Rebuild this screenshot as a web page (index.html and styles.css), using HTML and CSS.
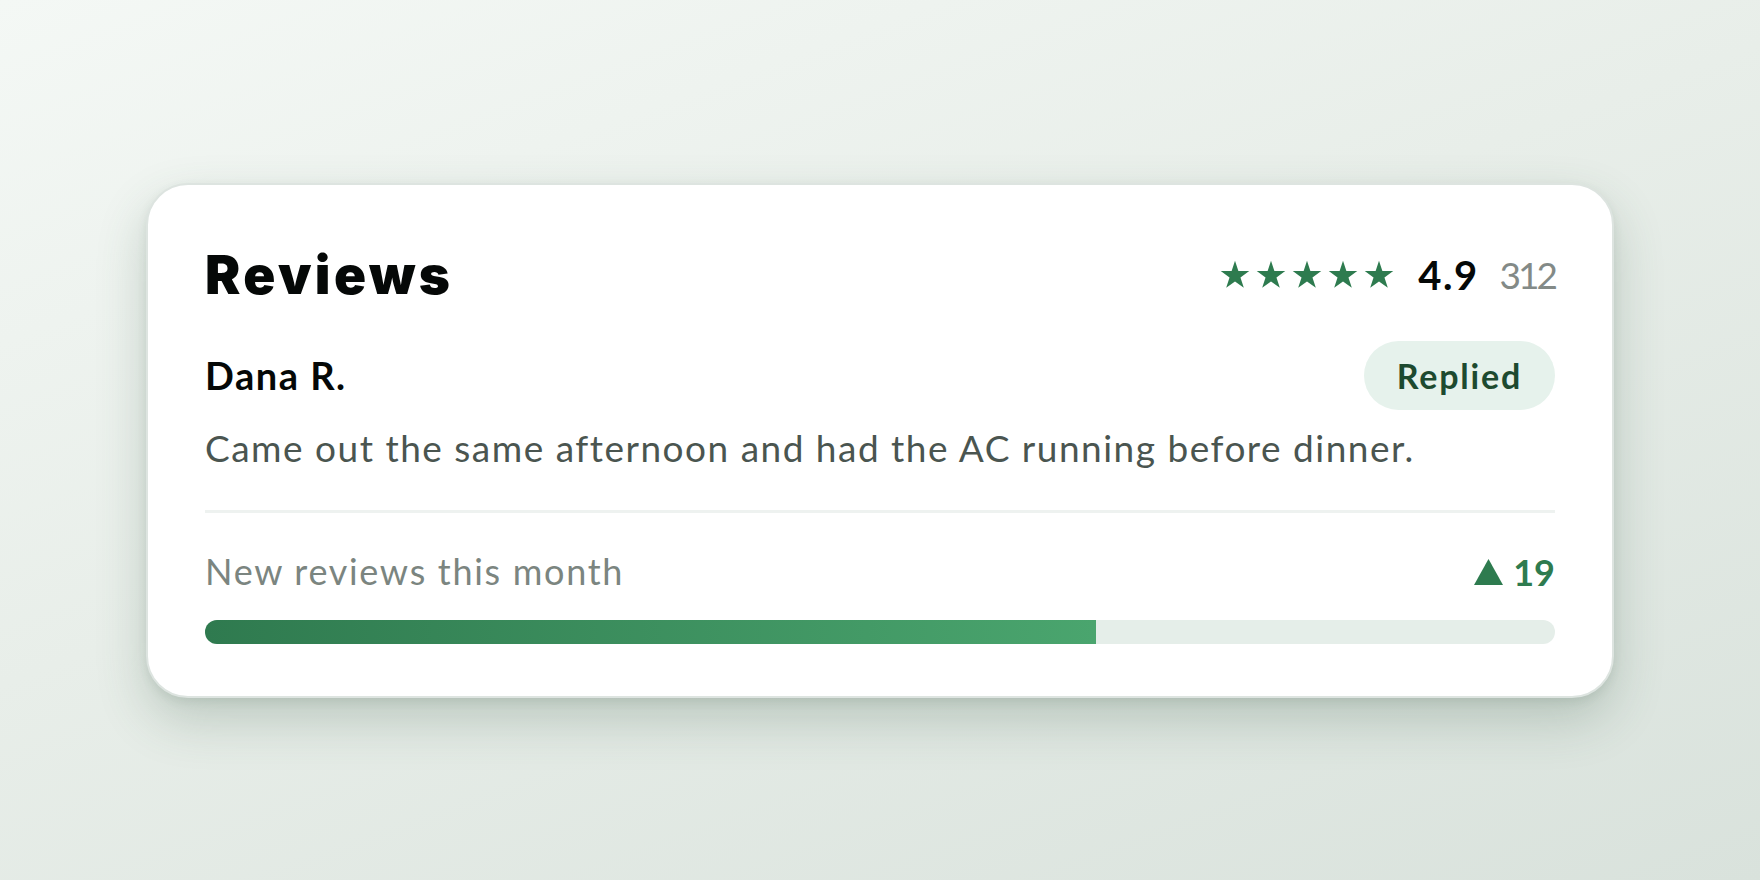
FILE: index.html
```html
<!DOCTYPE html>
<html lang="en">
<head>
  <meta charset="UTF-8">
  <title>Reviews</title>
  <link rel="stylesheet" href="styles.css">
</head>
<body>
  <div class="card">
    <div class="head">
      <h1>Reviews</h1>
      <div class="rating">
        <div class="stars">
          <svg viewBox="0 0 24 24"><polygon points="12,0.5 14.7,8.78 23.41,8.79 16.37,13.92 19.05,22.21 12,17.1 4.95,22.21 7.63,13.92 0.59,8.79 9.3,8.78"/></svg>
          <svg viewBox="0 0 24 24"><polygon points="12,0.5 14.7,8.78 23.41,8.79 16.37,13.92 19.05,22.21 12,17.1 4.95,22.21 7.63,13.92 0.59,8.79 9.3,8.78"/></svg>
          <svg viewBox="0 0 24 24"><polygon points="12,0.5 14.7,8.78 23.41,8.79 16.37,13.92 19.05,22.21 12,17.1 4.95,22.21 7.63,13.92 0.59,8.79 9.3,8.78"/></svg>
          <svg viewBox="0 0 24 24"><polygon points="12,0.5 14.7,8.78 23.41,8.79 16.37,13.92 19.05,22.21 12,17.1 4.95,22.21 7.63,13.92 0.59,8.79 9.3,8.78"/></svg>
          <svg viewBox="0 0 24 24"><polygon points="12,0.5 14.7,8.78 23.41,8.79 16.37,13.92 19.05,22.21 12,17.1 4.95,22.21 7.63,13.92 0.59,8.79 9.3,8.78"/></svg>
        </div>
        <span class="score">4.9</span>
        <span class="count">312</span>
      </div>
    </div>

    <div class="review-top">
      <span class="name">Dana R.</span>
      <span class="pill">Replied</span>
    </div>
    <p class="review-text">Came out the same afternoon and had the AC running before dinner.</p>

    <div class="divider"></div>

    <div class="stat">
      <span class="stat-label">New reviews this month</span>
      <span class="stat-value">
        <svg class="up" viewBox="0 0 29 26"><polygon points="14.5,0 29,26 0,26"/></svg>
        19
      </span>
    </div>
    <div class="bar">
      <div class="bar-fill" style="width:66%"></div>
    </div>
  </div>
</body>
</html>
```

FILE: styles.css
```css
html, body {
  height: 100%;
}
body {
  margin: 0;
  display: flex;
  align-items: center;
  justify-content: center;
  background: linear-gradient(160deg, #f4f8f5 0%, #e8eee9 45%, #d9e2dc 100%);
  font-family: "Lato", "Inter", sans-serif;
}
.card {
  width: 1468px;
  box-sizing: border-box;
  padding: 60px 57px 52px;
  background: #fff;
  border: 2px solid #dde4e0;
  border-radius: 42px;
  box-shadow: 0 22px 50px rgba(60, 90, 72, 0.24), 0 4px 10px rgba(60, 90, 72, 0.1);
}
.head {
  display: flex;
  justify-content: space-between;
  align-items: center;
}
h1 {
  margin: 0;
  font-family: "Inter", sans-serif;
  font-weight: 900;
  font-size: 53px;
  line-height: 60px;
  letter-spacing: 3.4px;
  color: #050807;
}
.rating {
  display: flex;
  align-items: center;
}
.stars {
  display: flex;
  gap: 6px;
  margin-right: 24px;
}
.stars svg {
  width: 30px;
  height: 30px;
  fill: #2e7b4f;
}
.score {
  font-weight: 700;
  font-size: 40px;
  letter-spacing: 1.5px;
  color: #050807;
  margin-right: 21px;
}
.count {
  font-size: 37px;
  letter-spacing: -3px;
  color: #838a87;
}
.review-top {
  display: flex;
  justify-content: space-between;
  align-items: center;
  margin-top: 36px;
}
.name {
  font-weight: 700;
  font-size: 38px;
  letter-spacing: 1.5px;
  color: #050807;
}
.pill {
  display: inline-block;
  height: 69px;
  line-height: 69px;
  padding: 0 33px;
  border-radius: 35px;
  background: #e6f2ec;
  color: #1d4a2f;
  font-weight: 700;
  font-size: 34px;
  letter-spacing: 1.8px;
}
.review-text {
  margin: 16px 0 0;
  font-size: 37px;
  line-height: 44px;
  letter-spacing: 1.5px;
  color: #4a5550;
}
.divider {
  height: 3px;
  margin-top: 40px;
  background: #eef2f0;
}
.stat {
  display: flex;
  justify-content: space-between;
  align-items: baseline;
  margin-top: 37px;
  line-height: 42px;
}
.stat-label {
  font-size: 36px;
  letter-spacing: 1.7px;
  color: #7b8580;
}
.stat-value {
  display: flex;
  align-items: center;
  gap: 10px;
  font-weight: 700;
  font-size: 36px;
  color: #2e7b4f;
}
.stat-value .up {
  width: 29px;
  height: 26px;
  fill: #2e7b4f;
}
.bar {
  height: 24px;
  margin-top: 27px;
  border-radius: 12px;
  background: #e5eee9;
  overflow: hidden;
}
.bar-fill {
  height: 100%;
  background: linear-gradient(90deg, #2f7a4f, #4aa56e);
}
```
